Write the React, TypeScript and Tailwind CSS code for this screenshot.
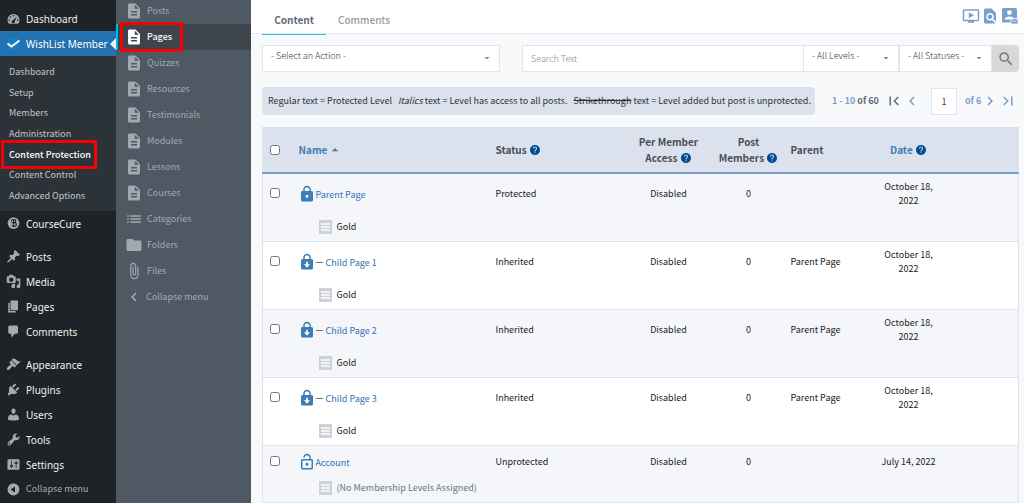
import type { ReactNode } from 'react'
import clsx from 'clsx'
import {
  MdArrowDropDown,
  MdArrowDropUp,
  MdAttachFile,
  MdChevronLeft,
  MdChevronRight,
  MdDescription,
  MdFindInPage,
  MdFirstPage,
  MdFolder,
  MdHelp,
  MdLastPage,
  MdList,
  MdLock,
  MdLockOpen,
  MdOndemandVideo,
  MdSearch,
} from 'react-icons/md'

const dashicons = {
  dashboard:
    'M3.76 17h12.48A8 8 0 1 0 3.76 17zM10 5.2a1.1 1.1 0 1 1 0 2.2 1.1 1.1 0 0 1 0-2.2zM5.9 7a1.1 1.1 0 1 1 0 2.2 1.1 1.1 0 0 1 0-2.2zM4.3 11a1.1 1.1 0 1 1 0 2.2 1.1 1.1 0 0 1 0-2.2zM15.7 11a1.1 1.1 0 1 1 0 2.2 1.1 1.1 0 0 1 0-2.2zM14.6 7.2l-3 6.6a2 2 0 1 1-2.6-1.4z',
  posts:
    'M10.44 3.02l1.82-1.82 6.36 6.35-1.83 1.82c-1.05-.68-2.48-.57-3.41.36l-.75.75c-.92.93-1.04 2.35-.35 3.41l-1.83 1.82-2.41-2.41-2.8 2.79c-.42.42-3.38 2.71-3.8 2.29s1.86-3.39 2.28-3.81l2.79-2.79L4.1 9.36l1.83-1.82c1.05.69 2.48.57 3.4-.36l.75-.75c.93-.92 1.05-2.35.36-3.41z',
  media:
    'M13 11V4c0-.55-.45-1-1-1h-1.67L9 1H5L3.67 3H2c-.55 0-1 .45-1 1v7c0 .55.45 1 1 1h10c.55 0 1-.45 1-1zM7 4.5a3 3 0 1 1 0 6 3 3 0 0 1 0-6zM14 6h5v10.5a2.5 2.5 0 1 1-2-2.45V9h-3zM8 13h4v3.5a2.5 2.5 0 1 1-2-2.45V14H8z',
  pages: 'M6 15V2h10v13H6zM5 16h8v2H3V5h2v11z',
  comments: 'M5 2h9c1.1 0 2 .9 2 2v7c0 1.1-.9 2-2 2h-2l-5 5v-5H5c-1.1 0-2-.9-2-2V4c0-1.1.9-2 2-2z',
  appearance:
    'M14.48 11.06L7.41 3.99l1.5-1.5c.5-.56 2.3-.47 3.51.32 1.21.8 1.43 1.28 2.91 2.1 1.18.64 2.45 1.26 4.45.85zm-.71.71L6.7 4.7 4.93 6.47c-.39.39-.39 1.02 0 1.41l1.06 1.06c.39.39.39 1.03 0 1.42-.6.6-1.43 1.11-2.21 1.69-.35.26-.7.53-1.01.84C1.43 14.23.4 16.08 1.4 17.07c.99 1 2.84-.03 4.18-1.36.31-.31.58-.66.85-1.02.57-.78 1.08-1.61 1.69-2.21.39-.39 1.02-.39 1.41 0l1.06 1.06c.39.39 1.02.39 1.41 0z',
  plugins:
    'M13.11 4.36L9.87 7.6 8 5.73l3.24-3.24c.35-.34 1.05-.2 1.56.32.52.51.66 1.21.31 1.55zm-8 1.77l.91-1.12 9.01 9.01-1.19.84c-.71.71-2.63 1.16-3.82 1.16H6.14L4.9 17.26c-.59.59-1.54.59-2.12 0-.59-.58-.59-1.53 0-2.12l1.24-1.24v-3.88c0-1.13.4-3.19 1.09-3.89zm7.26 3.97l3.24-3.24c.34-.35 1.04-.21 1.55.31.52.51.66 1.21.31 1.55l-3.24 3.25z',
  users:
    'M10 9.25c-2.27 0-2.73-3.44-2.73-3.44C7 4.02 7.82 2 9.97 2c2.16 0 2.98 2.02 2.71 3.81 0 0-.41 3.44-2.68 3.44zm0 2.57L12.72 10c2.39 0 4.52 2.33 4.52 4.53v2.49s-3.65 1.13-7.24 1.13c-3.65 0-7.24-1.13-7.24-1.13v-2.49c0-2.25 1.94-4.48 4.47-4.48z',
  tools:
    'M16.68 9.77c-1.34 1.34-3.3 1.67-4.95.99l-5.41 6.52c-.99.99-2.59.99-3.58 0s-.99-2.59 0-3.57l6.52-5.42c-.68-1.65-.35-3.61.99-4.95 1.28-1.28 3.12-1.62 4.72-1.06l-2.89 2.89 2.82 2.82 2.86-2.87c.53 1.58.18 3.39-1.08 4.65zM3.81 16.21c.4.39 1.04.39 1.43 0 .4-.4.4-1.04 0-1.43-.39-.4-1.03-.4-1.43 0-.39.39-.39 1.03 0 1.43z',
  settings:
    'M18 16V4c0-.55-.45-1-1-1H3c-.55 0-1 .45-1 1v12c0 .55.45 1 1 1h14c.55 0 1-.45 1-1zM8 11h1c.55 0 1 .45 1 1s-.45 1-1 1H8v1.5c0 .28-.22.5-.5.5s-.5-.22-.5-.5V13H6c-.55 0-1-.45-1-1s.45-1 1-1h1V5.5c0-.28.22-.5.5-.5s.5.22.5.5V11zm5-2h-1c-.55 0-1-.45-1-1s.45-1 1-1h1V5.5c0-.28.22-.5.5-.5s.5.22.5.5V7h1c.55 0 1 .45 1 1s-.45 1-1 1h-1v5.5c0 .28-.22.5-.5.5s-.5-.22-.5-.5V9z',
  collapse:
    'M10 2.16c4.33 0 7.84 3.51 7.84 7.84s-3.51 7.84-7.84 7.84S2.16 14.33 2.16 10 5.71 2.16 10 2.16zm2 11.72V6.12L6.18 9.97z',
}

const Dashicon = ({ name }: { name: keyof typeof dashicons }) => (
  <svg viewBox="0 0 20 20" className="w-[15px] h-[15px] shrink-0 fill-[#a7aaad]" fillRule="evenodd">
    <path d={dashicons[name]} />
  </svg>
)

const CourseCureIcon = () => (
  <svg viewBox="0 0 20 20" className="w-[15px] h-[15px] shrink-0">
    <circle cx="10" cy="9.5" r="7.8" fill="#a7aaad" />
    <path d="M7 7c0-3 6-3 6-.5 0 1.8-3 2.3-5.5 2.5M9.5 9c4-.5 5 1.5 4 3.5-1.5 2-5.5 1.5-5.5-.5" fill="none" stroke="#1d2327" strokeWidth="1.5" />
    <path d="M10 5v9" stroke="#1d2327" strokeWidth="1.2" />
  </svg>
)

const WishListIcon = () => (
  <svg viewBox="0 0 15 15" className="w-[15px] h-[15px] shrink-0">
    <rect x="2" y="2" width="11" height="12" fill="#1b7cc4" />
    <path d="M1.5 7.5L5.5 10.5 13.5 4.5" fill="none" stroke="#fff" strokeWidth="1.8" />
  </svg>
)

const submenu = [
  'Dashboard',
  'Setup',
  'Members',
  'Administration',
  'Content Protection',
  'Content Control',
  'Advanced Options',
]

const contentMenu: { name: keyof typeof dashicons; label: string }[] = [
  { name: 'posts', label: 'Posts' },
  { name: 'media', label: 'Media' },
  { name: 'pages', label: 'Pages' },
  { name: 'comments', label: 'Comments' },
]

const adminMenu: { name: keyof typeof dashicons; label: string }[] = [
  { name: 'appearance', label: 'Appearance' },
  { name: 'plugins', label: 'Plugins' },
  { name: 'users', label: 'Users' },
  { name: 'tools', label: 'Tools' },
  { name: 'settings', label: 'Settings' },
]

const AdminItem = ({ icon, label, active }: { icon: ReactNode; label: string; active?: boolean }) => (
  <a
    href="#"
    className={clsx(
      'relative flex items-center h-[25px] gap-[5px] pl-1.5 whitespace-nowrap',
      active ? 'bg-[#2271b1] text-white' : 'text-[#f0f0f1]'
    )}
  >
    {icon}
    {label}
    {active && (
      <span className="absolute right-0 top-1/2 -translate-y-1/2 border-y-[6px] border-r-[6px] border-y-transparent border-r-[#f0f0f1]" />
    )}
  </a>
)

// Red marker frame drawn over a menu entry
const Highlight = ({ className }: { className: string }) => (
  <span className={clsx('absolute border-[3px] border-[#f90006] pointer-events-none z-10', className)} />
)

const AdminSidebar = () => (
  <aside className="w-[116px] shrink-0 bg-[#1d2327] pt-1.5 font-['Noto_Sans',sans-serif] text-[10px] leading-4">
    <nav>
      <AdminItem icon={<Dashicon name="dashboard" />} label="Dashboard" />
      <AdminItem icon={<WishListIcon />} label="WishList Member" active />
      <ul className="grid auto-rows-fr h-[155px] bg-[#2c3338] pt-1.5 pb-[5px] text-[9px] text-[#c3c6c9] font-['Noto_Sans_CJK_SC',sans-serif]">
        {submenu.map((label) => (
          <li key={label} className="relative flex items-center pl-[9px]">
            <a href="#" className={clsx('whitespace-nowrap', label === 'Content Protection' && 'font-medium text-white')}>
              {label}
            </a>
            {label === 'Content Protection' && <Highlight className="left-px w-24 -inset-y-1" />}
          </li>
        ))}
      </ul>
      <AdminItem icon={<CourseCureIcon />} label="CourseCure" />
      <div className="mt-2">
        {contentMenu.map((item) => (
          <AdminItem key={item.label} icon={<Dashicon name={item.name} />} label={item.label} />
        ))}
      </div>
      <div className="mt-2">
        {adminMenu.map((item) => (
          <AdminItem key={item.label} icon={<Dashicon name={item.name} />} label={item.label} />
        ))}
      </div>
      <button className="flex items-center h-6 gap-[5px] pl-1.5 text-[9px] text-[#a7aaad] font-['Noto_Sans_CJK_SC',sans-serif]">
        <Dashicon name="collapse" />
        Collapse menu
      </button>
    </nav>
  </aside>
)

const sections = [
  { icon: MdDescription, label: 'Posts' },
  { icon: MdDescription, label: 'Pages' },
  { icon: MdDescription, label: 'Quizzes' },
  { icon: MdDescription, label: 'Resources' },
  { icon: MdDescription, label: 'Testimonials' },
  { icon: MdDescription, label: 'Modules' },
  { icon: MdDescription, label: 'Lessons' },
  { icon: MdDescription, label: 'Courses' },
  { icon: MdList, label: 'Categories' },
  { icon: MdFolder, label: 'Folders' },
  { icon: MdAttachFile, label: 'Files' },
]

const SectionSidebar = () => (
  <aside className="w-[135px] shrink-0 bg-[#4f5964] text-[9px] leading-4 text-[#a3a9b0] overflow-hidden">
    <nav className="-mt-0.5">
      {sections.map((item) => {
        const isActive = item.label === 'Pages'
        return (
          <a
            key={item.label}
            href="#"
            className={clsx(
              'relative flex items-center h-[26px] gap-1 pb-px',
              isActive ? 'pl-[7px] bg-[#3e444b] text-white font-medium border-l-2 border-[#00b9eb]' : 'pl-[9px]'
            )}
          >
            <item.icon size={18} />
            {item.label}
            {isActive && <Highlight className="left-0.5 w-[63px] -top-0.5 h-[30px]" />}
          </a>
        )
      })}
      <button className="flex items-center h-[26px] gap-[3px] pb-px pl-[9px]">
        <MdChevronLeft size={18} />
        Collapse menu
      </button>
    </nav>
  </aside>
)

const Dropdown = ({ label, className }: { label: string; className: string }) => (
  <div className={clsx('relative h-[27px] bg-white border border-[#e1e5f0]', className)}>
    <select aria-label={label} className="block w-full h-5 pl-2 pr-4 appearance-none bg-transparent text-[9px] font-light text-[#333] outline-none">
      <option>{label}</option>
    </select>
    <MdArrowDropDown size={12} className="absolute right-1.5 top-1.5 text-[#888] pointer-events-none" />
  </div>
)

// Account box with a small envelope in the corner
const ContactIcon = () => (
  <svg viewBox="0 0 16 16" className="w-4 h-4" fill="currentColor">
    <path
      fillRule="evenodd"
      d="M1.5 0h12A1.5 1.5 0 0 1 15 1.5V14.5H1.5A1.5 1.5 0 0 1 0 13V1.5A1.5 1.5 0 0 1 1.5 0zM7.5 2.2a2.4 2.4 0 1 1 0 4.8 2.4 2.4 0 0 1 0-4.8zM2.5 11.5c0-2 3-3 5-3s5 1 5 3z"
    />
    <path d="M9 10.5h7V16H9z" stroke="#fff" strokeWidth=".8" />
    <path d="M9.5 11.5l3 2 3-2" fill="none" stroke="#fff" strokeWidth=".7" />
  </svg>
)

const TopBar = () => (
  <header className="flex justify-between h-[34px] bg-white border-b border-[#e4e8ef] pl-[11px] pr-1.5">
    <nav className="flex pt-2 text-[10px] leading-6 font-medium">
      <a href="#" className="w-16 h-[27px] text-center font-bold text-[#5f6b77] border-b border-[#1fc0ee]">
        Content
      </a>
      <a href="#" className="ml-3 text-[#999]">
        Comments
      </a>
    </nav>
    <div className="flex items-center gap-px pb-0.5 text-[#7a9fcd]">
      <button aria-label="Video tutorial"><MdOndemandVideo size={18} /></button>
      <button aria-label="Documentation"><MdFindInPage size={18} /></button>
      <button aria-label="Contact support" className="ml-0.5"><ContactIcon /></button>
    </div>
  </header>
)

const Filters = () => (
  <div className="flex">
    <Dropdown label="- Select an Action -" className="w-[238px]" />
    <div className="flex flex-1 ml-[22px]">
      <input
        type="text"
        aria-label="Search Text"
        placeholder="Search Text"
        className="flex-1 min-w-0 h-[27px] px-2 bg-white border border-[#e1e5f0] text-[9px] font-light placeholder:text-[#888]"
      />
      <Dropdown label="- All Levels -" className="w-[95px] border-l-0" />
      <Dropdown label="- All Statuses -" className="w-[93px]" />
      <button aria-label="Search" className="flex items-center justify-center w-[27px] bg-[#d8d8d8] text-[#777] rounded-r-sm">
        <MdSearch size={18} />
      </button>
    </div>
  </div>
)

const Legend = () => (
  <div className="flex items-center h-7 pl-1.5 pr-1 gap-1.5 rounded-sm bg-[#dbe2ed] text-[9px] text-[#333] whitespace-nowrap">
    <span>Regular text = Protected Level</span>
    <span><em>Italics</em> text = Level has access to all posts.</span>
    <span><s>Strikethrough</s> text = Level added but post is unprotected.</span>
  </div>
)

const Pagination = () => (
  <div className="flex items-center flex-1 pl-[17px] text-[9px] font-bold text-[#7a9fcd] whitespace-nowrap">
    <span>1 - 10 <span className="text-[#5f6b77]">of 60</span></span>
    <button aria-label="First page" className="ml-1.5 text-[#5f6b77]"><MdFirstPage size={18} /></button>
    <button aria-label="Previous page"><MdChevronLeft size={18} /></button>
    <input
      aria-label="Page"
      defaultValue="1"
      className="w-[26px] h-[27px] ml-2.5 mr-2 bg-white border border-[#e1e5f0] text-center font-normal text-[#444]"
    />
    <span>of 6</span>
    <button aria-label="Next page"><MdChevronRight size={18} /></button>
    <button aria-label="Last page"><MdLastPage size={18} /></button>
  </div>
)

const Help = () => <MdHelp size={12} className="inline-block align-[-2px] text-[#004b91]" />

const InheritedLock = () => (
  <svg viewBox="0 0 24 24" width="18" height="18" fill="currentColor">
    <path
      fillRule="evenodd"
      d="M18 8h-1V6c0-2.76-2.24-5-5-5S7 3.24 7 6v2H6c-1.1 0-2 .9-2 2v10c0 1.1.9 2 2 2h12c1.1 0 2-.9 2-2V10c0-1.1-.9-2-2-2zM8.9 8V6c0-1.71 1.39-3.1 3.1-3.1s3.1 1.39 3.1 3.1v2zM10.8 11.5h2.4v3.5h2.8l-4 4.5-4-4.5h2.8z"
    />
  </svg>
)

const locks = {
  Protected: <MdLock size={18} />,
  Inherited: <InheritedLock />,
  Unprotected: <MdLockOpen size={18} />,
}

type Row = {
  name: string
  status: keyof typeof locks
  level?: string
  parent?: string
  date: string
}

const rows: Row[] = [
  { name: 'Parent Page', status: 'Protected', level: 'Gold', date: 'October 18, 2022' },
  { name: 'Child Page 1', status: 'Inherited', level: 'Gold', parent: 'Parent Page', date: 'October 18, 2022' },
  { name: 'Child Page 2', status: 'Inherited', level: 'Gold', parent: 'Parent Page', date: 'October 18, 2022' },
  { name: 'Child Page 3', status: 'Inherited', level: 'Gold', parent: 'Parent Page', date: 'October 18, 2022' },
  { name: 'Account', status: 'Unprotected', date: 'July 14, 2022' },
]

const LevelIcon = () => (
  <svg viewBox="0 0 13 14" className="w-[13px] h-3.5 shrink-0">
    <path d="M0 0h13v14H0z" fill="#ced2d6" />
    <path d="M2 3h9v2H2zM2 6h9v2H2zM2 9h9v2H2z" fill="#f1f3f5" />
  </svg>
)

const PageRow = ({ row }: { row: Row }) => {
  const pad = row.level ? 'pt-[5px]' : 'pt-px'
  const cell = 'flex items-center h-[30px]'
  return (
    <tr className="align-top border-b border-[#dbe4ef] odd:bg-[#f4f6fa] even:bg-white">
      <td className={clsx('pl-[7px]', pad)}>
        <div className="flex items-center h-7">
          <input type="checkbox" aria-label={`Select ${row.name}`} className="w-[10px] h-[10px]" />
        </div>
      </td>
      <td className={clsx('pb-1', pad)}>
        <div className={cell}>
          <span className="-ml-px text-[#3d7db8]">{locks[row.status]}</span>
          {row.parent && <span className="mr-0.5">—</span>}
          <a href="#" className="pt-0.5 text-[#3274b0]">{row.name}</a>
        </div>
        <div className={clsx('flex items-center h-5 pl-5 gap-[5px] whitespace-nowrap', row.level ? 'mt-2' : 'mt-px text-[#6c757d]')}>
          <LevelIcon />
          {row.level ?? '(No Membership Levels Assigned)'}
        </div>
      </td>
      <td className={pad}><div className={cell}>{row.status}</div></td>
      <td className={pad}><div className={clsx(cell, 'justify-center')}>Disabled</div></td>
      <td className={pad}><div className={clsx(cell, 'justify-center')}>0</div></td>
      <td className={pad}><div className={clsx(cell, 'pl-3')}>{row.parent}</div></td>
      <td className={pad}><div className={clsx(cell, 'justify-center text-center', row.level ? 'px-3' : 'whitespace-nowrap')}>{row.date}</div></td>
      <td />
    </tr>
  )
}

const PagesTable = () => (
  <table className="w-full table-fixed border-collapse text-[9px] leading-[14px] text-[#222] border-x border-[#dbe4ef]">
    <colgroup>
      <col className="w-9" />
      <col />
      <col className="w-[123px]" />
      <col className="w-[100px]" />
      <col className="w-[60px]" />
      <col className="w-[92px]" />
      <col className="w-[76px]" />
      <col className="w-[72px]" />
    </colgroup>
    <thead className="bg-[#dbe2ed] border-b-2 border-[#7a9fcd] text-[10px] leading-4 text-[#4a4f55] text-left">
      <tr className="h-[46px]">
        <th className="pl-[7px]">
          <input type="checkbox" aria-label="Select all" className="block w-[10px] h-[10px]" />
        </th>
        <th>
          <a href="#" className="flex items-center text-[#3d7db8]">
            Name <MdArrowDropUp size={16} />
          </a>
        </th>
        <th>Status <Help /></th>
        <th className="text-center whitespace-nowrap">Per Member<br />Access <Help /></th>
        <th className="text-center whitespace-nowrap">Post<br />Members <Help /></th>
        <th className="pl-3">Parent</th>
        <th className="text-center">
          <a href="#" className="text-[#3d7db8]">Date</a> <Help />
        </th>
        <th />
      </tr>
    </thead>
    <tbody>
      {rows.map((row) => (
        <PageRow key={row.name} row={row} />
      ))}
    </tbody>
  </table>
)

const App = () => (
  <div className="flex min-h-screen bg-[#f8f9fb] font-['Noto_Sans_CJK_SC',sans-serif]">
    <AdminSidebar />
    <SectionSidebar />
    <main className="flex-1 min-w-0">
      <TopBar />
      <div className="pt-[11px] pl-[11px] pr-[5px]">
        <Filters />
        <div className="flex mt-[15px] mb-3">
          <Legend />
          <Pagination />
        </div>
        <PagesTable />
      </div>
    </main>
  </div>
)

export default App
